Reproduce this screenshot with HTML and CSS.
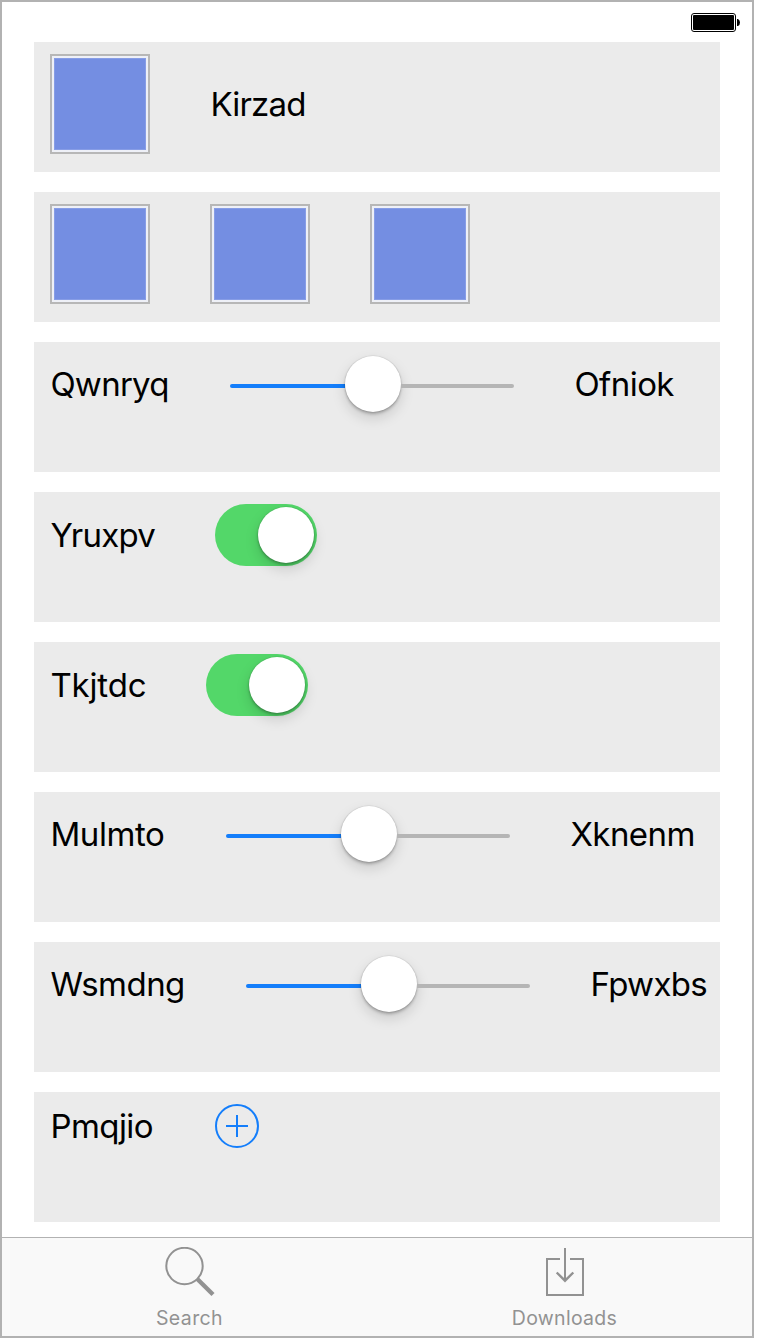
FILE: index.html
```html
<!DOCTYPE html>
<html lang="en">
<head>
<meta charset="utf-8">
<title>Controls</title>
<link rel="stylesheet" href="styles.css">
</head>
<body>
<div class="screen">
  <header class="status">
    <svg class="battery" width="50" height="20" viewBox="0 0 50 20">
      <rect x="0.5" y="0.5" width="44" height="18" rx="2.5" fill="#fff" stroke="#000"/>
      <rect x="2" y="2" width="41" height="15" rx="1" fill="#000"/>
      <path d="M46 6h1q2 1 2 3.5t-2 3.5h-1z" fill="#000"/>
    </svg>
  </header>
  <main class="rows">
    <section class="row"><span class="tile"></span><span class="label kirzad">Kirzad</span></section>
    <section class="row"><span class="tile"></span><span class="tile"></span><span class="tile"></span></section>
    <section class="row"><span class="label qwnryq">Qwnryq</span><span class="slider"><span class="fill"></span><span class="knob"></span><span class="rest"></span></span><span class="label ofniok">Ofniok</span></section>
    <section class="row"><span class="label yruxpv">Yruxpv</span><span class="toggle"><span class="knob"></span></span></section>
    <section class="row"><span class="label tkjtdc">Tkjtdc</span><span class="toggle"><span class="knob"></span></span></section>
    <section class="row"><span class="label mulmto">Mulmto</span><span class="slider"><span class="fill"></span><span class="knob"></span><span class="rest"></span></span><span class="label xknenm">Xknenm</span></section>
    <section class="row"><span class="label wsmdng">Wsmdng</span><span class="slider"><span class="fill"></span><span class="knob"></span><span class="rest"></span></span><span class="label fpwxbs">Fpwxbs</span></section>
    <section class="row"><span class="label pmqjio">Pmqjio</span>
      <svg width="44" height="44" viewBox="0 0 44 44" fill="none" stroke="#147efb" stroke-width="2"><circle cx="22" cy="22" r="21"/><path d="M11 22h22M22 11v22"/></svg>
    </section>
  </main>
  <nav class="tabs">
    <a class="tab">
      <svg width="50" height="50" viewBox="0 0 50 50" fill="none" stroke="#929292"><circle cx="19.5" cy="19" r="18.2" stroke-width="2"/><path d="M32.3 32L48 47.5" stroke-width="4.4"/></svg>
      <span class="caption search">Search</span>
    </a>
    <a class="tab">
      <svg width="50" height="50" viewBox="0 0 50 50" fill="none" stroke="#929292" stroke-width="2"><path d="M20 12H7v36h36V12H30M25 1v33"/><path d="M16.7 25.5L25 33.7L33.3 25.5" stroke-width="2.4"/></svg>
      <span class="caption downloads">Downloads</span>
    </a>
  </nav>
</div>
</body>
</html>
```
FILE: styles.css
```css
* { box-sizing: border-box; }
body { margin: 0; background: #fff; font-family: Inter, "Liberation Sans", sans-serif; color: #000; }
.screen { width: 754px; height: 1338px; border: 2px solid #b2b2b2; display: flex; flex-direction: column; }
.status { height: 40px; flex: none; display: flex; justify-content: flex-end; padding: 11px 11px 0 0; }
.rows { flex: 1; padding: 0 32px; display: flex; flex-direction: column; gap: 20px; }
.row { height: 130px; flex: none; background: #ebebeb; padding: 12px 0 0 16px; display: grid; grid-auto-flow: column; justify-content: start; align-content: start; align-items: center; column-gap: 60px; }
.label { font-size: 33px; line-height: 40px; white-space: nowrap; letter-spacing: -0.55px; text-indent: 0.4px; }
.kirzad { width: 100px; letter-spacing: -0.8px; }
.qwnryq { width: 120px; letter-spacing: -0.75px; }
.yruxpv, .pmqjio { width: 105px; }
.yruxpv { letter-spacing: -0.75px; }
.tkjtdc { width: 96px; letter-spacing: -0.15px; }
.mulmto { width: 116px; letter-spacing: -0.4px; }
.wsmdng { width: 136px; }
.ofniok, .xknenm, .fpwxbs { width: 0; }
.fpwxbs { letter-spacing: -0.7px; }
.tile { width: 100px; height: 100px; border: 2px solid #b7b7b7; background: #748ee2; box-shadow: inset 0 0 0 2px #eef0f7, inset 0 0 0 3px #879de6; }
.slider { width: 284px; height: 60px; display: flex; align-items: center; }
.fill, .rest { height: 4px; margin-top: 4px; }
.fill { width: 115px; background: #147efb; border-radius: 2px 0 0 2px; }
.rest { flex: 1; background: #b5b5b5; border-radius: 0 2px 2px 0; }
.knob { width: 56px; height: 56px; flex: none; border-radius: 50%; background: #fff; box-shadow: 0 0 1px 0.5px rgba(0,0,0,.1), 0 2px 3px rgba(0,0,0,.24), 0 6px 14px rgba(0,0,0,.15); }
.toggle { width: 102px; height: 62px; border-radius: 31px; background: #53d769; padding: 3px; display: flex; justify-content: flex-end; }
.tabs { height: 99px; flex: none; border-top: 1px solid #b2b2b2; background: #f9f9f9; display: grid; grid-template-columns: 1fr 1fr; }
.tab { display: flex; flex-direction: column; align-items: center; padding-top: 9px; color: #929292; }
.caption { font-size: 19.5px; line-height: 24px; margin-top: 9px; letter-spacing: 0.4px; }
.downloads { letter-spacing: 0.3px; }
```
